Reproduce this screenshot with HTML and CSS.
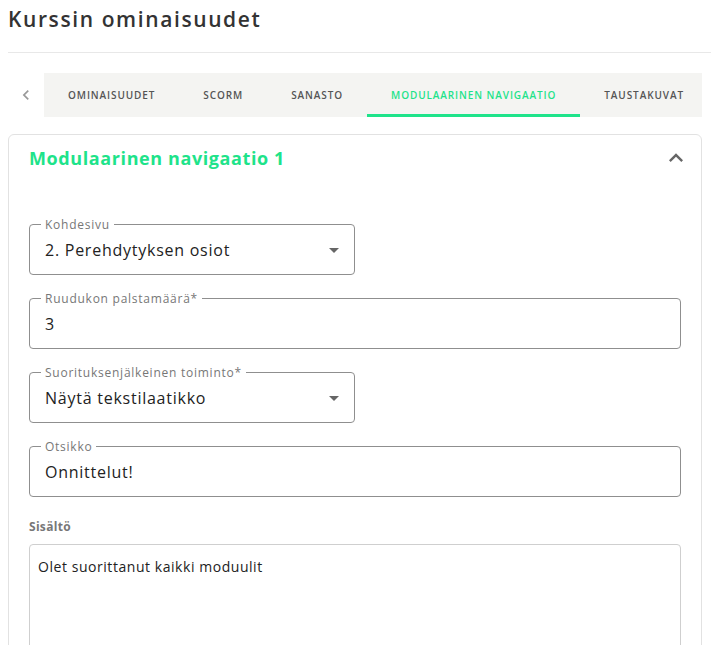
FILE: index.html
```html
<!DOCTYPE html>
<html lang="fi">
<head>
<meta charset="utf-8">
<title>Kurssin ominaisuudet</title>
<link rel="stylesheet" href="styles.css">
</head>
<body>
<div class="page">
  <h1 class="page-title">Kurssin ominaisuudet</h1>
  <div class="divider"></div>
  <div class="tabs-row">
    <button class="tab-scroll" aria-label="Edellinen">
      <svg width="20" height="20" viewBox="0 0 24 24"><path d="M15.41 7.41 14 6l-6 6 6 6 1.41-1.41L10.83 12z" fill="#999"/></svg>
    </button>
    <div class="tabs">
      <div class="tab">Ominaisuudet</div>
      <div class="tab">SCORM</div>
      <div class="tab">Sanasto</div>
      <div class="tab active">Modulaarinen navigaatio</div>
      <div class="tab">Taustakuvat</div>
    </div>
  </div>

  <section class="card">
    <div class="card-head">
      <h2 class="card-title">Modulaarinen navigaatio 1</h2>
      <svg class="collapse" width="28" height="28" viewBox="0 0 24 24"><path d="M7.41 15.41 12 10.83l4.59 4.58L18 14l-6-6-6 6z" fill="#666"/></svg>
    </div>

    <div class="fields">
      <div class="field half">
        <span class="legend">Kohdesivu</span>
        <span class="value">2. Perehdytyksen osiot</span>
        <svg class="arrow" width="24" height="24" viewBox="0 0 24 24"><path d="M7 10l5 5 5-5z" fill="#666"/></svg>
      </div>
      <div class="field">
        <span class="legend">Ruudukon palstamäärä*</span>
        <span class="value">3</span>
      </div>
      <div class="field half">
        <span class="legend">Suorituksenjälkeinen toiminto*</span>
        <span class="value">Näytä tekstilaatikko</span>
        <svg class="arrow" width="24" height="24" viewBox="0 0 24 24"><path d="M7 10l5 5 5-5z" fill="#666"/></svg>
      </div>
      <div class="field">
        <span class="legend">Otsikko</span>
        <span class="value">Onnittelut!</span>
      </div>
    </div>

    <div class="content-label">Sisältö</div>
    <div class="textarea">Olet suorittanut kaikki moduulit</div>
  </section>
</div>
</body>
</html>
```

FILE: styles.css
```css
html, body {
  margin: 0;
  padding: 0;
  background: #ffffff;
  overflow: hidden;
}
body {
  font-family: "Open Sans", "DejaVu Sans", sans-serif;
  color: #222;
}
.page {
  padding-left: 8px;
  height: 645px;
  overflow: hidden;
}
.page-title {
  margin: 0;
  padding-top: 5px;
  height: 29px;
  line-height: 28px;
  font-size: 21px;
  font-weight: 600;
  color: #333;
  letter-spacing: 1.6px;
}
.divider {
  margin-top: 18px;
  height: 1px;
  background: #e8e8e8;
}
.tabs-row {
  margin-top: 20px;
  width: 694px;
  display: flex;
  height: 44px;
}
.tab-scroll {
  width: 36px;
  flex: 0 0 36px;
  border: 0;
  background: #fff;
  padding: 0;
  display: flex;
  align-items: center;
  justify-content: center;
}
.tabs {
  flex: 1;
  display: flex;
  background: #f4f4f2;
  overflow: hidden;
}
.tab {
  flex: 0 0 auto;
  padding: 2px 24px 0;
  display: flex;
  align-items: center;
  font-size: 10px;
  font-weight: 600;
  text-transform: uppercase;
  letter-spacing: 0.9px;
  color: #555;
  border-bottom: 3px solid transparent;
  box-sizing: border-box;
}
.tab.active {
  color: #1ee38a;
  border-bottom-color: #1ee38a;
}
.card {
  margin-top: 17px;
  width: 694px;
  box-sizing: border-box;
  border: 1px solid #e2e2e2;
  border-radius: 6px;
  padding: 0 20px 20px;
  height: 600px;
}
.card-head {
  display: flex;
  justify-content: space-between;
  align-items: center;
  height: 46px;
}
.card-title {
  margin: 0;
  font-size: 18px;
  font-weight: 700;
  color: #1ee38a;
  letter-spacing: 0.6px;
}
.collapse {
  margin-right: -9px;
}
.fields {
  margin-top: 43px;
  display: flex;
  flex-direction: column;
  gap: 23px;
}
.field {
  position: relative;
  height: 51px;
  box-sizing: border-box;
  border: 1px solid #8f8f8f;
  border-radius: 4px;
  display: flex;
  align-items: center;
  padding: 0 15px;
}
.field.half {
  width: 326px;
}
.legend {
  position: absolute;
  left: 11px;
  top: -6px;
  padding: 0 4px;
  background: #fff;
  font-size: 12px;
  line-height: 12px;
  color: #777;
  letter-spacing: 0.75px;
}
.value {
  font-size: 16px;
  color: #222;
  flex: 1;
  letter-spacing: 0.75px;
}
.arrow {
  margin-right: -7px;
}
.content-label {
  margin-top: 22px;
  font-size: 12px;
  font-weight: 700;
  color: #777;
  line-height: 16px;
  letter-spacing: 0.3px;
}
.textarea {
  margin-top: 9px;
  height: 120px;
  border: 1px solid #cfcfcf;
  border-radius: 4px;
  padding: 12px 8px;
  font-size: 14px;
  color: #222;
  letter-spacing: 0.55px;
}
```
